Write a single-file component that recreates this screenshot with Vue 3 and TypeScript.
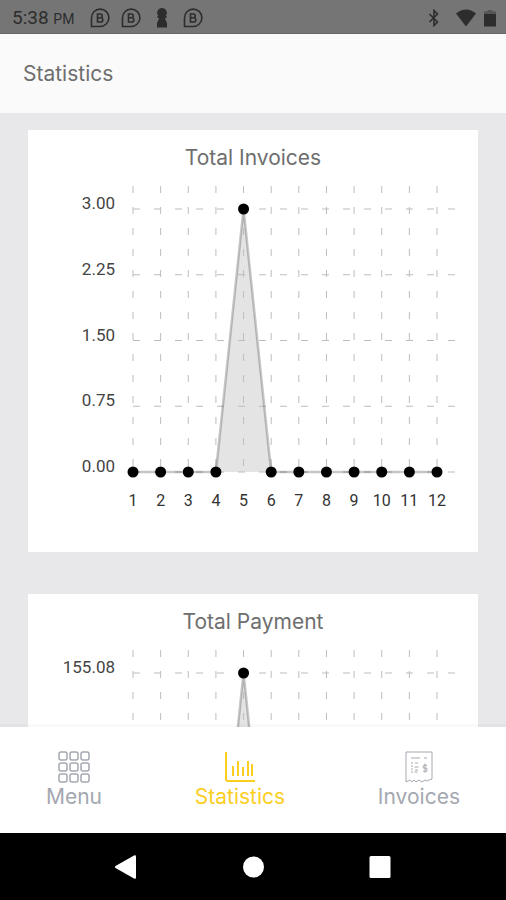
<script setup lang="ts">
interface Point {
  x: number
  y: number
}

interface Chart {
  title: string
  labels: string[]
  values: number[]
}

const AXIS_LEFT = 105
const AXIS_RIGHT = 428
const AXIS_TOP = 37
const AXIS_BOTTOM = 300
const GRID_TOP = 14
const MONTHS = 12
const STEP = 304 / (MONTHS - 1)

const months = Array.from({ length: MONTHS }, (_, i) => i + 1)

const charts: Chart[] = [
  {
    title: 'Total Invoices',
    labels: ['3.00', '2.25', '1.50', '0.75', '0.00'],
    values: [0, 0, 0, 0, 3, 0, 0, 0, 0, 0, 0, 0],
  },
  {
    title: 'Total Payment',
    labels: ['155.08', '116.31', '77.54', '38.77', '0.00'],
    values: [0, 0, 0, 0, 155.08, 0, 0, 0, 0, 0, 0, 0],
  },
]

const monthX = (index: number): number => AXIS_LEFT + index * STEP
const rowY = (index: number): number => AXIS_TOP + (index * (AXIS_BOTTOM - AXIS_TOP)) / 4

function points(chart: Chart): Point[] {
  const max = Math.max(...chart.values)
  return chart.values.map((value, i) => ({
    x: monthX(i),
    y: AXIS_BOTTOM - (value / max) * (AXIS_BOTTOM - AXIS_TOP),
  }))
}

const polyline = (chart: Chart): string =>
  points(chart)
    .map((p) => `${p.x},${p.y}`)
    .join(' ')
</script>

<template>
  <div class="screen">
    <div class="status">
      <span class="clock">5:38 <small>PM</small></span>
      <div class="notices">
        <template v-for="n in 4" :key="n">
          <svg v-if="n === 3" class="icon" viewBox="0 0 20 20" aria-hidden="true">
            <path class="solid" d="M10 0a4.800 4.800 0 0 0-3.500 8.100H5.500v2h1.700L5 15v4.500h10V15l-2.200-4.900h1.700v-2h-1A4.800 4.800 0 0 0 10 0z" />
          </svg>
          <svg v-else class="icon" viewBox="0 0 20 20" aria-hidden="true">
            <path class="line" d="M1.500 18.500V10A8.700 8.700 0 1 1 10 18.500z" />
            <path class="line" d="M7.500 6v8h3.200a2.100 2.100 0 0 0 0-4.200H7.500h2.800a1.900 1.900 0 0 0 0-3.800z" />
          </svg>
        </template>
      </div>
      <div class="signals">
        <svg class="bluetooth" viewBox="0 0 12 18" aria-hidden="true">
          <path class="line" d="M1.500 5l8 8L6 16.500v-15L9.500 5l-8 8" />
        </svg>
        <svg class="wifi" viewBox="0 0 20 18" aria-hidden="true">
          <path class="solid" d="M0 4.500Q10-3.500 20 4.500L10 17.500z" />
        </svg>
        <svg class="battery" viewBox="0 0 12 18" aria-hidden="true">
          <path class="faded" d="M3.500 1h5v1.500H12V6H0V2.500h3.500z" />
          <path class="solid" d="M0 5h12v12.500H0z" />
        </svg>
      </div>
    </div>

    <header class="header">
      <h1>Statistics</h1>
    </header>

    <main class="content">
      <section v-for="chart in charts" :key="chart.title" class="card">
        <h2>{{ chart.title }}</h2>
        <svg class="chart" viewBox="0 0 450 338" role="img" :aria-label="chart.title">
          <polygon class="area" :points="polyline(chart)" />
          <line
            v-for="(label, i) in chart.labels"
            :key="label"
            class="grid"
            :x1="AXIS_LEFT"
            :x2="AXIS_RIGHT"
            :y1="rowY(i)"
            :y2="rowY(i)"
          />
          <line
            v-for="(month, i) in months"
            :key="month"
            class="grid"
            :x1="monthX(i)"
            :x2="monthX(i)"
            :y1="GRID_TOP"
            :y2="AXIS_BOTTOM"
          />
          <polyline class="curve" :points="polyline(chart)" />
          <circle v-for="(p, i) in points(chart)" :key="i" :cx="p.x" :cy="p.y" r="5.500" />
          <text
            v-for="(label, i) in chart.labels"
            :key="label"
            class="value"
            x="87"
            :y="rowY(i)"
          >{{ label }}</text>
          <text
            v-for="(month, i) in months"
            :key="month"
            class="month"
            :x="monthX(i)"
            y="334"
          >{{ month }}</text>
        </svg>
      </section>
    </main>

    <nav class="tabs">
      <a href="#menu" class="tab">
        <svg viewBox="0 0 32 32" aria-hidden="true">
          <template v-for="row in 3" :key="row">
            <rect
              v-for="col in 3"
              :key="col"
              :x="col * 11 - 10"
              :y="row * 11 - 10"
              width="8"
              height="8"
              rx="2"
            />
          </template>
        </svg>
        Menu
      </a>
      <a href="#statistics" class="tab active" aria-current="page">
        <svg viewBox="0 0 32 32" aria-hidden="true">
          <path class="bars" d="M2 1v27q0 2 2 2h27" />
          <path class="bars" d="M9 25V15M14 25V10M19 25V16M24 25V10M28 25V13" />
        </svg>
        Statistics
      </a>
      <a href="#invoices" class="tab">
        <svg class="receipt" viewBox="0 0 32 32" aria-hidden="true">
          <path d="M3 31V1h26v27l-3 1-2 1-2-1-3 2-3-2-3 2-2-2-2 2-2-2z" />
          <path class="detail" d="M8 7h9M21 7h3M8 12h2M12 12h3M8 15h2M11.500 16h4M8 18h2M12 19h3M8 21h2M11.500 21h3M24 14.500q-4-1.500-4 1t2 1.500 2 2-4 1M22 12.500v9" />
        </svg>
        Invoices
      </a>
    </nav>

    <div class="system">
      <button type="button" aria-label="Back">
        <svg viewBox="0 0 32 32"><path d="M5.500 15L24 4.500q2-1 2 1v21q0 2-2 1L5.500 17q-1.500-1 0-2z" /></svg>
      </button>
      <button type="button" aria-label="Home">
        <svg viewBox="0 0 32 32"><circle cx="16.500" cy="16" r="10.500" /></svg>
      </button>
      <button type="button" aria-label="Recent apps">
        <svg viewBox="0 0 32 32"><rect x="5.500" y="5" width="21" height="22" rx="1.500" /></svg>
      </button>
    </div>
  </div>
</template>

<style>
body {
  margin: 0;
}
</style>

<style scoped>
.screen {
  display: flex;
  flex-direction: column;
  height: 100vh;
  background: #e8e8ea;
  color: #6e6e6e;
  font-family: Inter, "Open Sans", sans-serif;
}

.status {
  display: flex;
  flex: none;
  align-items: center;
  box-sizing: border-box;
  height: 34px;
  padding: 2px 10px 0 12px;
  border-bottom: 1px solid #666;
  background: #757575;
  color: #2d2d2d;
  font-family: Roboto, sans-serif;
}

.clock {
  width: 78px;
  font-size: 19px;
  white-space: nowrap;
}

.clock small {
  font-size: 14px;
}

.notices {
  display: flex;
  gap: 11px;
}

.icon {
  width: 20px;
  height: 20px;
}

.signals {
  display: flex;
  gap: 12px;
  margin-left: auto;
}

.signals svg {
  height: 18px;
}

.bluetooth,
.battery {
  width: 12px;
}

.wifi {
  width: 20px;
  margin-left: 4px;
  margin-right: -4px;
}

.solid {
  fill: #2d2d2d;
}

.faded {
  fill: #555;
}

.line {
  fill: none;
  stroke: #2d2d2d;
  stroke-width: 1.6;
}

.header {
  display: flex;
  flex: none;
  align-items: center;
  height: 79px;
  padding: 0 23px;
  background: #fafafa;
}

h1,
h2 {
  margin: 0;
  font-size: 21px;
  font-weight: 400;
  line-height: 24px;
}

.content {
  display: flex;
  flex: 1;
  flex-direction: column;
  gap: 42px;
  min-height: 0;
  padding: 17px 28px;
  overflow: auto;
  scrollbar-width: none;
}

.card {
  flex: none;
  box-sizing: border-box;
  padding: 16px 0 42px;
  background: #fff;
  text-align: center;
}

.chart {
  display: block;
  width: 100%;
  margin-top: 2px;
  font-family: Roboto, sans-serif;
}

.area {
  fill: #e4e4e4;
}

.grid {
  stroke: #bdbdbd;
  stroke-dasharray: 7 14;
}

.curve {
  fill: none;
  stroke: #000;
  stroke-opacity: 0.22;
  stroke-width: 2.5;
}

.value {
  fill: #444;
  font-size: 17px;
  text-anchor: end;
}

.month {
  fill: #333;
  font-size: 16px;
  text-anchor: middle;
}

.tabs {
  display: flex;
  flex: none;
  justify-content: space-between;
  box-sizing: border-box;
  height: 106px;
  padding: 24px 46px 0;
  background: #fff;
  box-shadow: 0 -3px rgba(0, 0, 0, 0.02);
  z-index: 1;
}

.tab {
  display: flex;
  flex-direction: column;
  align-items: center;
  color: #a4a8b0;
  font-size: 21px;
  line-height: 28px;
  text-decoration: none;
}

.tab svg {
  width: 32px;
  height: 32px;
  fill: none;
  stroke: currentColor;
  stroke-width: 1.5;
}

.tab .bars {
  stroke-width: 2;
}

.tab .receipt,
.tab svg.receipt {
  stroke-width: 1;
}

.active {
  color: #fbce1f;
}

.system {
  display: flex;
  flex: none;
  align-items: center;
  justify-content: center;
  gap: 95px;
  height: 67px;
  background: #000;
}

.system button {
  width: 32px;
  height: 32px;
  padding: 0;
  border: 0;
  background: none;
}

.system svg {
  display: block;
  fill: #fff;
}
</style>
